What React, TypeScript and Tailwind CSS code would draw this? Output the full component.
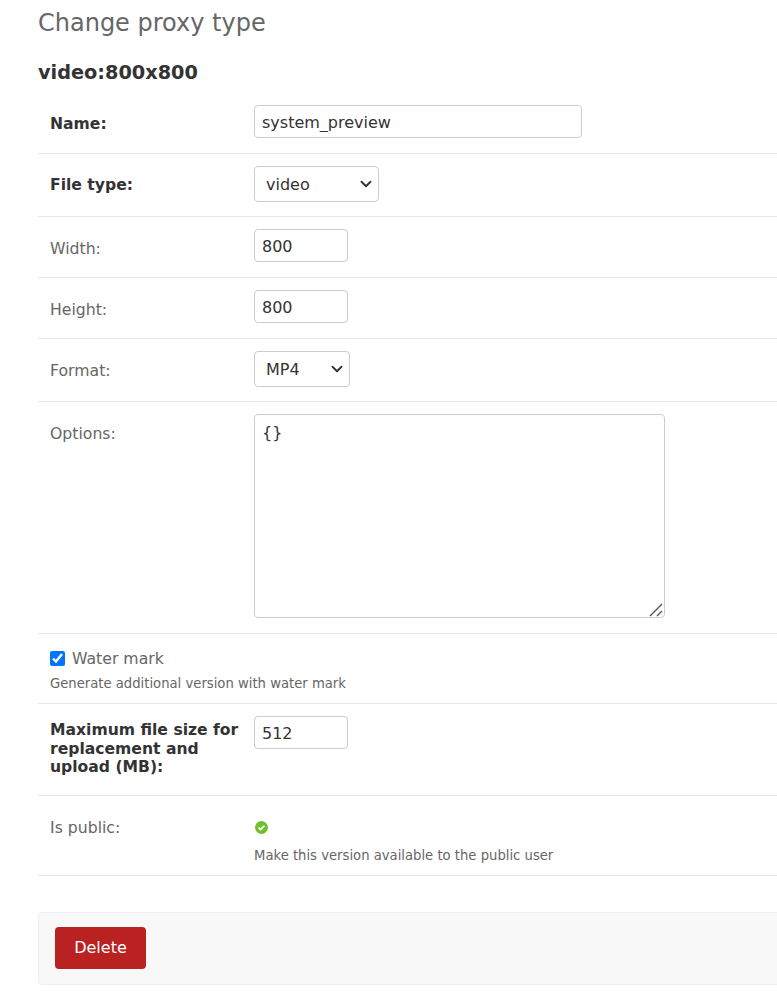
import { ChevronDown } from 'lucide-react';

const font = { fontFamily: '"DejaVu Sans", Verdana, sans-serif' };

function Row({ label, strong, tight, children }: { label: string; strong?: boolean; tight?: boolean; children: React.ReactNode }) {
  return (
    <div className={tight ? 'flex items-start border-b border-[#e8e8e8] pl-3 pt-3 pb-[14px]' : 'flex items-start border-b border-[#e8e8e8] pl-3 pt-3 pb-[15px]'}>
      <label
        className={
          strong
            ? 'w-[204px] shrink-0 pt-[10px] pr-2 text-[15.6px] leading-[19px] font-bold text-[#333]'
            : 'w-[204px] shrink-0 pt-[10px] pr-2 text-[15.7px] leading-[19px] text-[#666]'
        }
      >
        {label}
      </label>
      <div>{children}</div>
    </div>
  );
}

function Select({ value, width }: { value: string; width: string }) {
  return (
    <div className={`relative ${width}`}>
      <select
        className="block h-9 w-full appearance-none rounded-[4px] border border-[#ccc] bg-white pt-[2px] pl-[11px] text-[16px] text-[#333] outline-none"
        defaultValue={value}
      >
        <option value={value}>{value}</option>
      </select>
      <ChevronDown className="pointer-events-none absolute top-[9px] right-1 h-[18px] w-[18px] text-[#333]" strokeWidth={2.5} />
    </div>
  );
}

const inputClass =
  'block h-[33px] rounded-[4px] border border-[#ccc] bg-white px-[7px] pt-[2px] text-[16px] text-[#333] outline-none';

export default function App() {
  return (
    <div className="h-[993px] w-[777px] overflow-hidden bg-white pl-[38px]" style={font}>
      <h1 className="pt-[8px] text-[24px] leading-[30px] font-normal text-[#666]">Change proxy type</h1>
      <h2 className="mt-[23px] text-[19.3px] leading-[24px] font-bold text-[#333]">video:800x800</h2>

      <div className="mt-[8px]">
        <Row label="Name:" strong>
          <input className={`${inputClass} w-[328px]`} defaultValue="system_preview" />
        </Row>
        <Row label="File type:" strong tight>
          <Select value="video" width="w-[125px]" />
        </Row>
        <Row label="Width:">
          <input className={`${inputClass} w-[94px]`} defaultValue="800" />
        </Row>
        <Row label="Height:">
          <input className={`${inputClass} w-[94px]`} defaultValue="800" />
        </Row>
        <Row label="Format:" tight>
          <Select value="MP4" width="w-[96px]" />
        </Row>
        <Row label="Options:">
          <div className="relative">
            <textarea
              className="block h-[204px] w-[411px] resize-none rounded-[4px] border border-[#ccc] bg-white px-[7px] py-[6px] text-[16px] text-[#333] outline-none"
              defaultValue="{}"
            />
            {/* resize grip */}
            <svg className="pointer-events-none absolute right-[2px] bottom-[1px] h-[14px] w-[14px]" viewBox="0 0 14 14" fill="none" stroke="#555" strokeWidth="1.4">
              <path d="M1 13 13 1M8 13l5-5" />
            </svg>
          </div>
        </Row>

        <div className="border-b border-[#e8e8e8] pl-3 pt-[15px] pb-[11px]">
          <div className="flex items-center">
            <input type="checkbox" defaultChecked className="m-0 h-[15px] w-[15px] accent-[#0075ff]" />
            <label className="ml-[7px] text-[15.7px] leading-[19px] text-[#666]">Water mark</label>
          </div>
          <p className="mt-2 text-[13.2px] leading-[16px] text-[#666]">Generate additional version with water mark</p>
        </div>

        <div className="flex items-start border-b border-[#e8e8e8] pl-3 pt-3 pb-[18.5px]">
          <label className="w-[204px] shrink-0 pt-[5px] pr-2 text-[15.6px] leading-[18.5px] font-bold text-[#333]">
            Maximum file size for replacement and upload (MB):
          </label>
          <input className={`${inputClass} w-[94px]`} defaultValue="512" />
        </div>

        <div className="flex items-start border-b border-[#e8e8e8] pl-3 pt-[22px] pb-[11px]">
          <label className="w-[204px] shrink-0 text-[15.7px] leading-[19px] text-[#666]">Is public:</label>
          <div>
            <svg className="mt-[3px] ml-[1px] h-[13px] w-[13px]" viewBox="0 0 13 13">
              <circle cx="6.5" cy="6.5" r="6.5" fill="#70bf2b" />
              <path d="M3.6 6.6 5.6 8.6 9.4 4.8" fill="none" stroke="#fff" strokeWidth="1.8" />
            </svg>
            <p className="mt-[14px] text-[13.2px] leading-[16px] text-[#666]">Make this version available to the public user</p>
          </div>
        </div>
      </div>

      <div className="mt-9 -mr-4 rounded-[4px] border border-[#eee] bg-[#f8f8f8] px-4 pt-[14px] pb-[15px]">
        <button className="h-[42px] w-[91px] rounded-[4px] bg-[#ba2121] text-[16px] text-white">Delete</button>
      </div>
    </div>
  );
}
